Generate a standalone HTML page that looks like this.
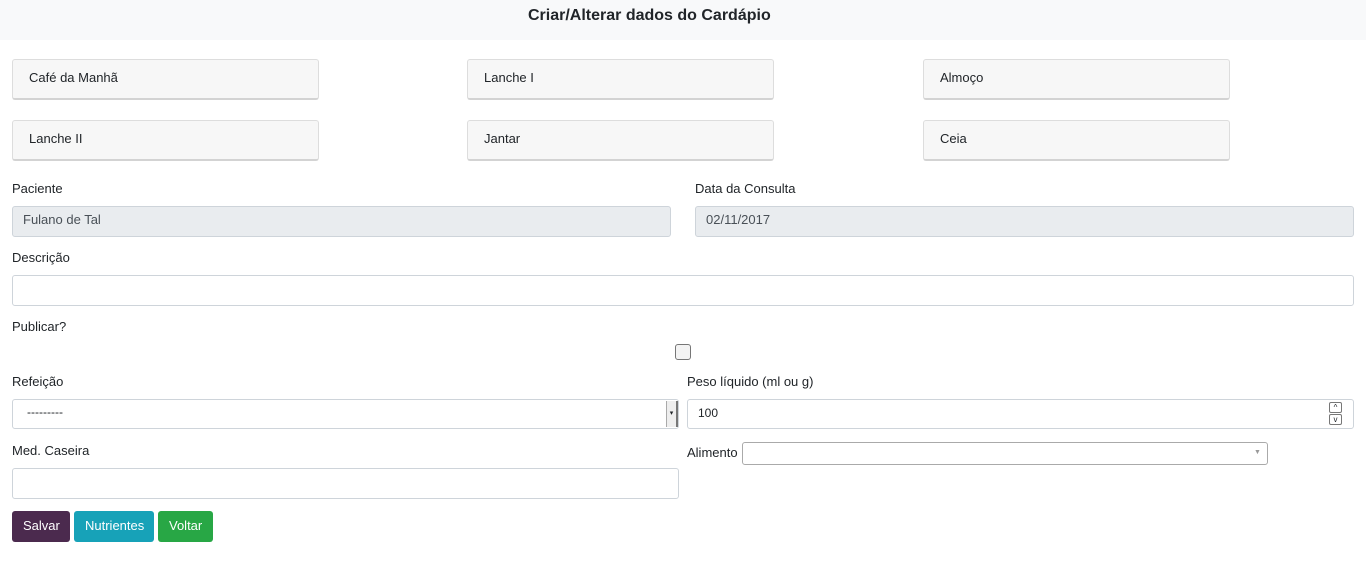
<!DOCTYPE html>
<html><head><meta charset="utf-8"><style>
*{box-sizing:border-box;margin:0;padding:0}
body{width:1366px;height:564px;background:#fff;font-family:"Liberation Sans",sans-serif;font-size:13px;color:#212529;position:relative;overflow:hidden}
.a{position:absolute}
.hdr{left:0;top:0;width:1366px;height:40px;background:#f8f9fa}
.hdr h1{position:absolute;left:528px;top:7px;font-size:16px;font-weight:bold;white-space:nowrap}
.card{width:307px;height:41px;background:#f7f7f7;border:1px solid #ddd;border-bottom:2px solid #d3d3d3;border-radius:3px;padding:10px 16px;font-size:13px}
.in{border:1px solid #ced4da;border-radius:3px;background:#fff;padding:6px 10px;font-size:13px}
.ro{background:#e9ecef;color:#495057}
.btn{color:#fff;border-radius:3px;height:31px;font-size:13px;padding:7px 11px}
</style></head><body>
<div class="a hdr"><h1>Criar/Alterar dados do Cardápio</h1></div>
<div class="a card" style="left:12px;top:59px">Café da Manhã</div>
<div class="a card" style="left:467px;top:59px">Lanche I</div>
<div class="a card" style="left:923px;top:59px">Almoço</div>
<div class="a card" style="left:12px;top:120px">Lanche II</div>
<div class="a card" style="left:467px;top:120px">Jantar</div>
<div class="a card" style="left:923px;top:120px">Ceia</div>

<div class="a" style="left:12px;top:181px">Paciente</div>
<div class="a in ro" style="left:12px;top:206px;width:659px;height:31px;padding-top:5px">Fulano de Tal</div>
<div class="a" style="left:695px;top:181px">Data da Consulta</div>
<div class="a in ro" style="left:695px;top:206px;width:659px;height:31px;padding-top:5px">02/11/2017</div>

<div class="a" style="left:12px;top:250px">Descrição</div>
<div class="a in" style="left:12px;top:275px;width:1342px;height:31px"></div>

<div class="a" style="left:12px;top:319px">Publicar?</div>
<div class="a" style="left:675px;top:344px;width:16px;height:16px;border:1px solid #767676;border-radius:3px;background:#f3f3f3"></div>

<div class="a" style="left:12px;top:374px">Refeição</div>
<div class="a in" style="left:12px;top:399px;width:667px;height:30px;padding:5px 14px;font-size:12px">---------</div>
<div class="a" style="left:666px;top:401px;width:12px;height:26px;background:#eee;border-left:1px solid #aaa;border-right:2px solid #777;font-size:7px;text-align:center;line-height:26px">▾</div>

<div class="a" style="left:687px;top:374px">Peso líquido (ml ou g)</div>
<div class="a in" style="left:687px;top:399px;width:667px;height:30px;font-size:12px">100</div>
<div class="a" style="left:1329px;top:402px;width:13px;height:11px;border:1px solid #777;border-radius:2px;font-size:8px;line-height:9px;text-align:center">^</div>
<div class="a" style="left:1329px;top:414px;width:13px;height:11px;border:1px solid #777;border-radius:2px;font-size:8px;line-height:9px;text-align:center">v</div>

<div class="a" style="left:12px;top:443px">Med. Caseira</div>
<div class="a in" style="left:12px;top:468px;width:667px;height:31px"></div>

<div class="a" style="left:687px;top:445px">Alimento</div>
<div class="a" style="left:742px;top:442px;width:526px;height:23px;border:1px solid #aaa;border-radius:3px;background:#fff"></div>
<div class="a" style="left:1254px;top:449px;font-size:7px;color:#999">▼</div>

<div class="a btn" style="left:12px;top:511px;width:58px;background:#4b2a4e">Salvar</div>
<div class="a btn" style="left:74px;top:511px;width:80px;background:#17a2b8">Nutrientes</div>
<div class="a btn" style="left:158px;top:511px;width:55px;background:#28a745">Voltar</div>
</body></html>
